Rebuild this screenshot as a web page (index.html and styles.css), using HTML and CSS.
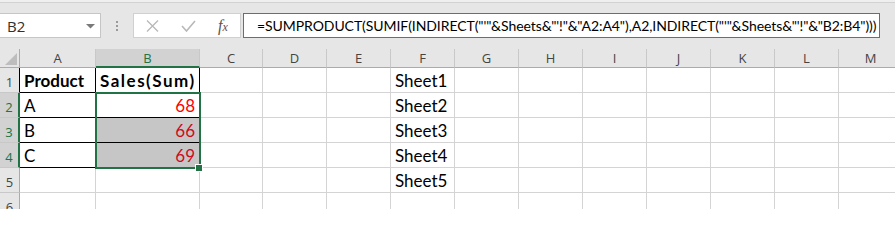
FILE: index.html
```html
<!DOCTYPE html>
<html>
<head>
<meta charset="utf-8">
<link rel="stylesheet" href="styles.css">
</head>
<body>
<div class="app">
  <div class="toolbar">
    <div class="namebox">
      <span class="nb-text">B2</span>
      <svg class="nb-arrow" width="9" height="5" viewBox="0 0 9 5"><polygon points="0,0 9,0 4.5,4.5" fill="#7a7a7a"/></svg>
    </div>
    <div class="dots"><i></i><i></i><i></i></div>
    <div class="fxbox">
      <svg class="ico-x" width="13" height="12" viewBox="0 0 13 12"><path d="M1 0.5 L12 11.5 M12 0.5 L1 11.5" stroke="#b8b8b8" stroke-width="1.3" fill="none"/></svg>
      <svg class="ico-ok" width="15" height="12" viewBox="0 0 15 12"><path d="M1 6 L5.5 11 L14 1" stroke="#b8b8b8" stroke-width="1.6" fill="none"/></svg>
      <span class="fx"><span class="fx-f">f</span><span class="fx-x">x</span></span>
    </div>
    <div class="formula">=SUMPRODUCT(SUMIF(INDIRECT("'"&amp;Sheets&amp;"'!"&amp;"A2:A4"),A2,INDIRECT("'"&amp;Sheets&amp;"'!"&amp;"B2:B4")))</div>
  </div>
  <div class="sheet">
    <div class="ch corner"><svg width="20" height="19" viewBox="0 0 20 19"><polygon points="17,4 17,16 5,16" fill="#bdbdbd"/></svg></div>
    <div class="ch">A</div><div class="ch selc">B</div><div class="ch">C</div><div class="ch">D</div><div class="ch">E</div><div class="ch">F</div><div class="ch">G</div><div class="ch">H</div><div class="ch">I</div><div class="ch">J</div><div class="ch">K</div><div class="ch">L</div><div class="ch">M</div>

    <div class="rh bk-r">1</div>
    <div class="c bk-r bk-b b">Product</div><div class="c bk-r bk-b b wide">Sales(Sum)</div><div class="c"></div><div class="c"></div><div class="c"></div><div class="c">Sheet1</div><div class="c"></div><div class="c"></div><div class="c"></div><div class="c"></div><div class="c"></div><div class="c"></div><div class="c"></div>

    <div class="rh selr">2</div>
    <div class="c bk-r bk-b">A</div><div class="c bk-r bk-b num red">68</div><div class="c"></div><div class="c"></div><div class="c"></div><div class="c">Sheet2</div><div class="c"></div><div class="c"></div><div class="c"></div><div class="c"></div><div class="c"></div><div class="c"></div><div class="c"></div>

    <div class="rh selr">3</div>
    <div class="c bk-r bk-b">B</div><div class="c bk-r bk-b num red2 fill">66</div><div class="c"></div><div class="c"></div><div class="c"></div><div class="c">Sheet3</div><div class="c"></div><div class="c"></div><div class="c"></div><div class="c"></div><div class="c"></div><div class="c"></div><div class="c"></div>

    <div class="rh selr">4</div>
    <div class="c bk-r bk-b">C</div><div class="c bk-r bk-b num red2 fill">69</div><div class="c"></div><div class="c"></div><div class="c"></div><div class="c">Sheet4</div><div class="c"></div><div class="c"></div><div class="c"></div><div class="c"></div><div class="c"></div><div class="c"></div><div class="c"></div>

    <div class="rh">5</div>
    <div class="c"></div><div class="c"></div><div class="c"></div><div class="c"></div><div class="c"></div><div class="c">Sheet5</div><div class="c"></div><div class="c"></div><div class="c"></div><div class="c"></div><div class="c"></div><div class="c"></div><div class="c"></div>

    <div class="rh">6</div>
    <div class="c"></div><div class="c"></div><div class="c"></div><div class="c"></div><div class="c"></div><div class="c"></div><div class="c"></div><div class="c"></div><div class="c"></div><div class="c"></div><div class="c"></div><div class="c"></div><div class="c"></div>

    <div class="sel"></div>
    <div class="handle"></div>
  </div>
</div>
</body>
</html>
```
FILE: styles.css
```css
html, body {
  margin: 0;
  padding: 0;
  background: #ffffff;
  overflow: hidden;
}
.app {
  width: 895px;
  height: 209px;
  overflow: hidden;
  font-family: Lato, "Liberation Sans", sans-serif;
}
.toolbar {
  height: 49px;
  box-sizing: border-box;
  background: #e6e6e6;
  border-top: 2px solid #efefef;
  box-shadow: inset 0 1px 0 #d2d2d2;
  padding-top: 11px;
  display: flex;
  align-items: flex-start;
}
.namebox {
  width: 101px;
  height: 25px;
  box-sizing: border-box;
  background: #fff;
  border: 1px solid #c6c6c6;
  border-left: none;
  display: flex;
  align-items: center;
  justify-content: space-between;
  padding: 0 5px 0 7px;
}
.nb-text {
  font-family: "Open Sans", sans-serif;
  font-size: 15px;
  color: #303030;
}
.nb-arrow { margin-top: 1px; }
.dots {
  width: 32px;
  height: 25px;
  display: flex;
  flex-direction: column;
  align-items: center;
  justify-content: center;
  gap: 2px;
}
.dots i {
  display: block;
  width: 2px;
  height: 2px;
  background: #9a9a9a;
}
.fxbox {
  width: 108px;
  height: 25px;
  box-sizing: border-box;
  background: #fff;
  border: 1px solid #d0d0d0;
  display: flex;
  align-items: center;
  padding-left: 12px;
}
.ico-x { margin-right: 22px; }
.ico-ok { margin-right: 22px; }
.fx {
  font-family: "Liberation Serif", serif;
  font-style: italic;
  color: #555;
  font-size: 16px;
  line-height: 1;
}
.fx-x { font-size: 12px; }
.formula {
  margin-left: 2px;
  width: 637px;
  height: 25px;
  box-sizing: border-box;
  background: #fff;
  border: 1px solid #e03c3c;
  padding-left: 13px;
  font-size: 14px;
  letter-spacing: -0.07px;
  line-height: 23px;
  color: #000;
  white-space: nowrap;
  overflow: hidden;
}
.sheet {
  position: relative;
  display: grid;
  grid-template-columns: 20px 76px 104px 63px 64px 64px 64px 64px 64px 64px 64px 64px 64px 64px;
  grid-template-rows: 19px 25px 25px 25px 25px 25px 25px;
  background: #fff;
}
.ch {
  background: #e6e6e6;
  border-right: 1px solid #c8c8c8;
  border-bottom: 1px solid #ababab;
  box-sizing: border-box;
  font-family: "Open Sans", sans-serif;
  font-size: 13px;
  color: #444;
  text-align: center;
  line-height: 18px;
}
.corner { border-right-color: #ababab; }
.corner svg { display: block; }
.selc {
  background: #d2d2d2;
  color: #217346;
  border-bottom: 2px solid #217346;
}
.rh {
  background: #e6e6e6;
  border-right: 1px solid #ababab;
  border-bottom: 1px solid #c8c8c8;
  box-sizing: border-box;
  font-family: "Open Sans", sans-serif;
  font-size: 13px;
  color: #444;
  text-align: center;
  line-height: 28px;
}
.rh.bk-r { border-right-color: #000; }
.selr {
  background: #d2d2d2;
  color: #217346;
  border-right: 2px solid #217346;
}
.c {
  border-right: 1px solid #d4d4d4;
  border-bottom: 1px solid #d4d4d4;
  box-sizing: border-box;
  font-size: 17px;
  line-height: 20px;
  padding: 3px 4px 0 4px;
  color: #000;
  white-space: nowrap;
}
.bk-r { border-right-color: #000; }
.bk-b { border-bottom-color: #000; }
.b { font-weight: bold; }
.wide { letter-spacing: 1.5px; }
.num { text-align: right; padding-right: 4px; }
.red { color: #ff0000; }
.red2 { color: #cf0a1e; }
.fill { background: #c6c6c6; }
.sel {
  position: absolute;
  left: 95px;
  top: 43px;
  width: 106px;
  height: 77px;
  box-sizing: border-box;
  border: 2px solid #217346;
  pointer-events: none;
}
.handle {
  position: absolute;
  left: 196px;
  top: 116px;
  width: 6px;
  height: 6px;
  background: #217346;
  box-shadow: 0 0 0 1px #fff;
}
```
